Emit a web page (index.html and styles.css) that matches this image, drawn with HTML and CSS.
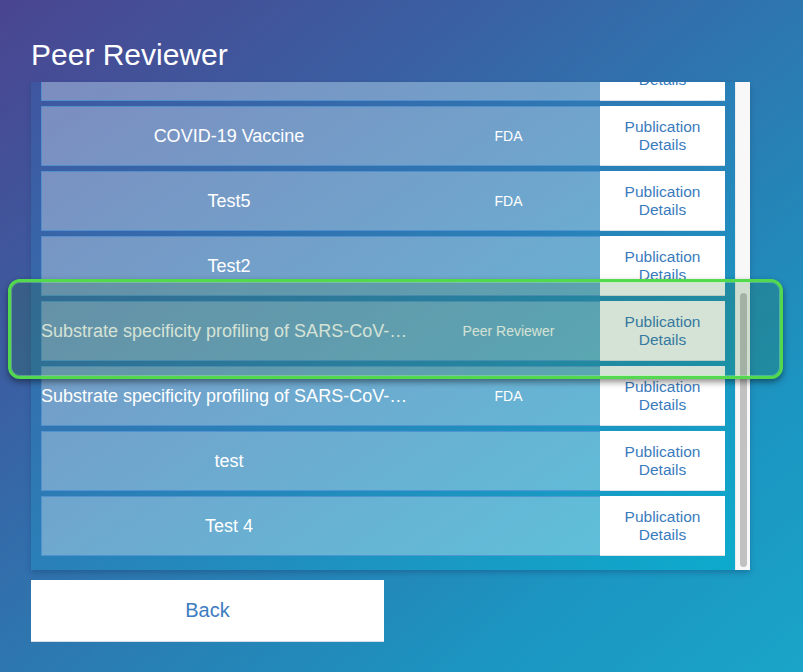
FILE: index.html
```html
<!DOCTYPE html>
<html lang="en">
<head>
<meta charset="utf-8">
<title>Peer Reviewer</title>
<link rel="stylesheet" href="styles.css">
</head>
<body>
<main class="page">
  <h1 class="title">Peer Reviewer</h1>
  <section class="panel">
    <div class="viewport">
      <div class="list">
        <div class="row"><div class="c-name">Test3</div><div class="c-org">FDA</div><a class="c-link">Publication<br>Details</a></div>
        <div class="row"><div class="c-name">COVID-19 Vaccine</div><div class="c-org">FDA</div><a class="c-link">Publication<br>Details</a></div>
        <div class="row"><div class="c-name">Test5</div><div class="c-org">FDA</div><a class="c-link">Publication<br>Details</a></div>
        <div class="row"><div class="c-name">Test2</div><div class="c-org"></div><a class="c-link">Publication<br>Details</a></div>
        <div class="row"><div class="c-name">Substrate specificity profiling of SARS-CoV-2 main protease</div><div class="c-org">Peer Reviewer</div><a class="c-link">Publication<br>Details</a></div>
        <div class="row"><div class="c-name">Substrate specificity profiling of SARS-CoV-2 main protease</div><div class="c-org">FDA</div><a class="c-link">Publication<br>Details</a></div>
        <div class="row"><div class="c-name">test</div><div class="c-org"></div><a class="c-link">Publication<br>Details</a></div>
        <div class="row"><div class="c-name">Test 4</div><div class="c-org"></div><a class="c-link">Publication<br>Details</a></div>
      </div>
    </div>
    <div class="scrollbar"><div class="thumb"></div></div>
  </section>
  <button class="back">Back</button>
  <div class="highlight"></div>
</main>
</body>
</html>
```

FILE: styles.css
```css
* { box-sizing: border-box; }
html, body { margin: 0; padding: 0; }
body {
  width: 803px;
  height: 672px;
  overflow: hidden;
  font-family: "Liberation Sans", Arial, sans-serif;
  background: linear-gradient(to bottom right, #4a4590 0%, #3a60a3 30%, #2a7cb2 55%, #1b96c2 80%, #1aa4c8 100%);
}
.page {
  position: relative;
  width: 803px;
  height: 672px;
  padding: 38px 0 0 31px;
}
.title {
  margin: 0 0 10px 0;
  font-size: 30px;
  line-height: 34px;
  font-weight: normal;
  color: #fff;
}
.panel {
  display: flex;
  width: 719px;
  height: 488px;
  background: linear-gradient(to bottom right, #3f56a0 0%, #2a80b8 50%, #0caccd 100%);
  box-shadow: 0 3px 5px rgba(20, 60, 110, 0.35);
}
.viewport {
  flex: 1;
  overflow: hidden;
  padding: 0 10px;
}
.list {
  margin-top: -41px;
  display: flex;
  flex-direction: column;
  gap: 5px;
}
.row {
  display: grid;
  grid-template-columns: 376px 183px 125px;
  height: 60px;
  background: rgba(255, 255, 255, 0.32);
  box-shadow: inset 0 0 0 1px rgba(70, 140, 205, 0.75);
  color: #fff;
  align-items: center;
}
.c-name {
  font-size: 18px;
  text-align: center;
  white-space: nowrap;
  overflow: hidden;
  text-overflow: ellipsis;
}
.c-org {
  font-size: 14px;
  text-align: center;
}
.c-link {
  align-self: stretch;
  display: flex;
  align-items: center;
  justify-content: center;
  text-align: center;
  background: #fff;
  color: #3a7bbd;
  font-size: 15.5px;
  line-height: 18px;
  border-bottom: 1px solid #dde3ea;
}
.scrollbar {
  width: 15px;
  background: #f8f8f8;
  padding: 211px 3px 0 4px;
  border-left: 1px solid #ececec;
}
.thumb {
  height: 274px;
  border-radius: 4px;
  background: #c1c1c1;
}
.back {
  display: block;
  margin-top: 10px;
  width: 353px;
  height: 62px;
  border: 0;
  border-bottom: 1px solid #d5dde6;
  background: #fff;
  color: #3d7dbf;
  font-family: "Liberation Sans", Arial, sans-serif;
  font-size: 20px;
  padding: 0;
}
.highlight {
  position: absolute;
  left: 8px;
  top: 279px;
  width: 775px;
  height: 100px;
  border: 3px solid #53d94d;
  border-radius: 12px;
  background: rgba(40, 115, 45, 0.2);
  box-shadow: 0 3px 6px rgba(0, 0, 0, 0.45), inset 0 0 0 1px rgba(170, 255, 160, 0.35);
}
```
